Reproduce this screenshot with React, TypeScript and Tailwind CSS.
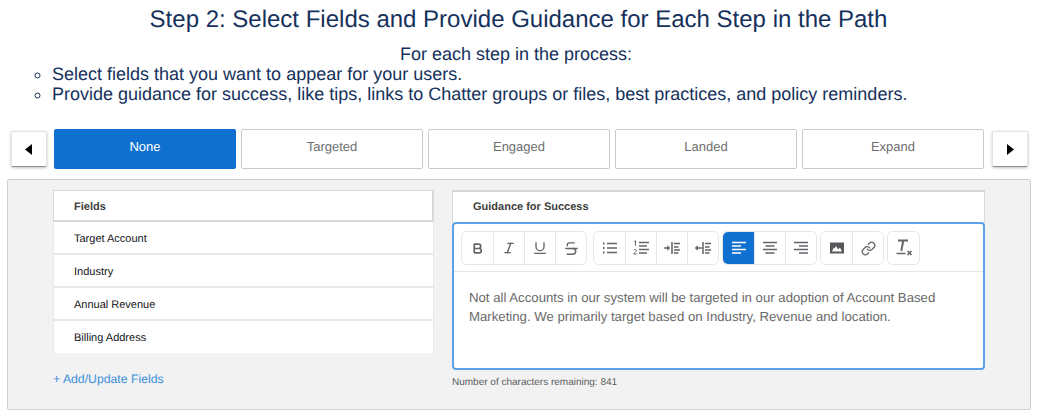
import { Bold, Italic, Link, Strikethrough, Underline } from "lucide-react";
import type { ReactNode } from "react";

const tabs = ["None", "Targeted", "Engaged", "Landed", "Expand"];
const fields = ["Target Account", "Industry", "Annual Revenue", "Billing Address"];

const Glyph = ({ children }: { children: ReactNode }) => (
  <svg width="18" height="18" viewBox="0 0 18 18" fill="none" stroke="#626468" strokeWidth="1.5">
    {children}
  </svg>
);

const BulletList = () => (
  <Glyph>
    <path d="M6 4.5h10M6 9h10M6 13.5h10" />
    <path d="M2 4.5h1.6M2 9h1.6M2 13.5h1.6" strokeWidth="1.8" />
  </Glyph>
);

const NumberList = () => (
  <Glyph>
    <path d="M7 3.5h10M7 7h8M7 10.5h10M7 14h8" />
    <path d="M2.2 2.6l1.3-.8v5" strokeWidth="1" />
    <path d="M1.8 11.2c.5-1.2 2.6-1 2.6.3 0 1.2-2.2 2-2.6 3.5h2.8" strokeWidth="1" />
  </Glyph>
);

const IndentRight = () => (
  <Glyph>
    <path d="M1 9h5" />
    <path d="M4.4 6.8L7 9l-2.6 2.2z" fill="#626468" strokeWidth="0.5" />
    <path d="M9 3v12" />
    <path d="M11 4.5h6M11 8h4.5M11 11h6M11 14h4.5" />
  </Glyph>
);

const IndentLeft = () => (
  <Glyph>
    <path d="M3 9h5" />
    <path d="M3.6 6.8L1 9l2.6 2.2z" fill="#626468" strokeWidth="0.5" />
    <path d="M9 3v12" />
    <path d="M11 4.5h6M11 8h4.5M11 11h6M11 14h4.5" />
  </Glyph>
);

const AlignLines = ({ d, color = "#626468" }: { d: string; color?: string }) => (
  <svg width="18" height="18" viewBox="0 0 18 18" fill="none" stroke={color} strokeWidth="1.6">
    <path d={d} />
  </svg>
);

const PictureIcon = () => (
  <svg width="16" height="16" viewBox="0 0 16 16">
    <path
      fillRule="evenodd"
      fill="#55575b"
      d="M1 2.5h14v11H1zM3 11.5h10L11 7.5 9.2 9.6 7 6 5.6 8.4 4.8 7.6z"
    />
    <circle cx="12" cy="5" r="1" fill="#55575b" />
  </svg>
);

const ClearFormat = () => (
  <svg width="20" height="20" viewBox="0 0 20 20" fill="none" stroke="#626468">
    <path d="M4 2.5h10" strokeWidth="1.8" />
    <path d="M9.3 2.5L7.3 13" strokeWidth="1.9" />
    <path d="M2.5 15.5h9" strokeWidth="1.5" />
    <path d="M13.5 13l4 4M17.5 13l-4 4" strokeWidth="1.6" />
  </svg>
);

const ToolButton = ({ children, active, first }: { children: ReactNode; active?: boolean; first?: boolean }) => (
  <div
    className={`flex h-[32px] w-[31px] items-center justify-center ${first ? "" : "border-l border-[#e4e6ea]"} ${
      active ? "bg-[#0f70d0]" : "bg-white"
    }`}
  >
    {children}
  </div>
);

const ToolGroup = ({ children }: { children: ReactNode }) => (
  <div className="flex overflow-hidden rounded-[5px] shadow-[0_0_0_1px_#e4e6ea]">{children}</div>
);

const ArrowButton = ({ direction }: { direction: "left" | "right" }) => (
  <div className="flex h-[36px] w-[36px] shrink-0 items-center justify-center rounded-[2px] border border-[#e2e2e2] border-b-[#8f8f8f] bg-white shadow-[0_1px_3px_rgba(0,0,0,0.25)]">
    <svg width="8" height="11" viewBox="0 0 8 11" fill="#000">
      <path d={direction === "left" ? "M7 0v11L0 5.5z" : "M1 0v11l7-5.5z"} />
    </svg>
  </div>
);

export default function App() {
  return (
    <div className="h-[420px] w-[1040px] overflow-hidden bg-white font-['Liberation_Sans',Arial,sans-serif] text-[#16325c] [text-rendering:geometricPrecision]">
      <h1 className="pr-[3px] pt-[5px] text-center text-[24px] leading-[30px]">
        Step 2: Select Fields and Provide Guidance for Each Step in the Path
      </h1>
      <div className="pt-[9px] text-[18px] leading-[20px]">
        <p className="pr-[8px] text-center">For each step in the process:</p>
        <ul className="list-[circle] pl-[52px]">
          <li>Select fields that you want to appear for your users.</li>
          <li>Provide guidance for success, like tips, links to Chatter groups or files, best practices, and policy reminders.</li>
        </ul>
      </div>

      <div className="mt-[25px] flex items-center pl-[11px] pr-[12px]">
        <ArrowButton direction="left" />
        <div className="ml-[7px] mr-[8px] flex gap-[5px]">
          {tabs.map((tab, i) => (
            <div
              key={tab}
              className={`flex h-[40px] w-[182px] items-center justify-center rounded-[2px] pb-[5px] text-[13px] ${
                i === 0
                  ? "bg-[#0f70d0] font-medium text-white"
                  : "border border-[#c9c9c9] bg-white text-[#6e6e6e]"
              }`}
            >
              {tab}
            </div>
          ))}
        </div>
        <ArrowButton direction="right" />
      </div>

      <div className="ml-[7px] mt-[10px] flex h-[231px] w-[1024px] gap-[18px] rounded-[2px] border border-[#d0d0d0] bg-[#f2f2f2] pl-[45px] pt-[10px]">
        <div className="w-[381px]">
          <div className="bg-white">
            <div className="flex h-[32px] items-center border-2 border-[#d8d8d8] border-l-[1px] border-t-[1px] pl-[20px] pt-[3px] text-[11px] font-bold text-[#3e3e3c]">
              Fields
            </div>
            {fields.map((field, i) => (
              <div
                key={field}
                className={`flex items-center border-x border-[#e6e8ec] pl-[20px] pt-[3px] text-[11px] text-[#16161a] ${
                  i < 3 ? "h-[33px] border-b-2" : "h-[32px]"
                }`}
              >
                {field}
              </div>
            ))}
          </div>
          <p className="mt-[18px] text-[12.25px] leading-[16px] text-[#3b8fdb]">+ Add/Update Fields</p>
        </div>

        <div className="w-[533px]">
          <div className="flex h-[32px] items-center border border-b-0 border-t-2 border-[#d8d8d8] bg-white pl-[20px] pt-[1px] text-[11px] font-bold text-[#3e3e3c]">
            Guidance for Success
          </div>
          <div className="h-[148px] rounded-[4px] border-2 border-[#5aa2ea] bg-white">
            <div className="flex h-[48px] items-start gap-[8px] border-b border-[#e4e6ea] pl-[8px] pt-[8px]">
              <ToolGroup>
                <ToolButton first><Bold size={13} color="#626468" strokeWidth={3.2} /></ToolButton>
                <ToolButton><Italic size={14} color="#626468" strokeWidth={2.4} /></ToolButton>
                <ToolButton><Underline size={16} color="#626468" strokeWidth={2} /></ToolButton>
                <ToolButton><Strikethrough size={17} color="#626468" strokeWidth={2} /></ToolButton>
              </ToolGroup>
              <ToolGroup>
                <ToolButton first><BulletList /></ToolButton>
                <ToolButton><NumberList /></ToolButton>
                <ToolButton><IndentRight /></ToolButton>
                <ToolButton><IndentLeft /></ToolButton>
              </ToolGroup>
              <div className="-ml-[3px]">
                <ToolGroup>
                  <ToolButton first active>
                    <AlignLines color="#ffffff" d="M2 3.5h14M2 7h9M2 10.5h14M2 14h9" />
                  </ToolButton>
                  <ToolButton><AlignLines d="M2 3.5h14M4.5 7h9M2 10.5h14M4.5 14h9" /></ToolButton>
                  <ToolButton><AlignLines d="M2 3.5h14M7 7h9M2 10.5h14M7 14h9" /></ToolButton>
                </ToolGroup>
              </div>
              <div className="-ml-[3px]">
                <ToolGroup>
                  <ToolButton first><PictureIcon /></ToolButton>
                  <ToolButton><Link size={15} color="#626468" strokeWidth={2.1} /></ToolButton>
                </ToolGroup>
              </div>
              <div className="-ml-[3px]">
                <ToolGroup>
                  <ToolButton first><ClearFormat /></ToolButton>
                </ToolGroup>
              </div>
            </div>
            <p className="pl-[15px] pr-[40px] pt-[16px] text-[13.2px] leading-[19px] text-[#6a6a6a]">
              Not all Accounts in our system will be targeted in our adoption of Account Based Marketing. We primarily target based on Industry, Revenue and location.
            </p>
          </div>
          <p className="mt-[6px] text-[10px] leading-[14px] text-[#5c5c5c]">Number of characters remaining: 841</p>
        </div>
      </div>
    </div>
  );
}
